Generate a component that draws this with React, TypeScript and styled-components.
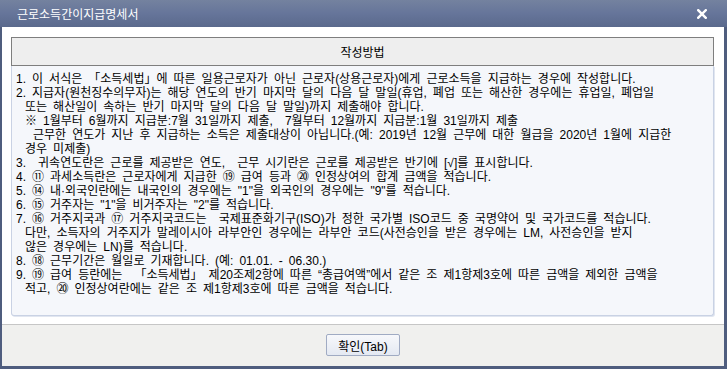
import React from 'react'
import styled, { createGlobalStyle } from 'styled-components'

const GlobalStyle = createGlobalStyle`
  html, body {
    margin: 0;
    padding: 0;
    background: #ffffff;
  }
  body {
    font-family: "Liberation Sans", "Noto Sans CJK KR", sans-serif;
    font-size: 12px;
    color: #000;
  }
`

const Window = styled.div`
  width: 727px;
  height: 369px;
  box-sizing: border-box;
  display: flex;
  flex-direction: column;
  background: #4f5d7e;
  padding: 0 3px 3px 2px;
`

const TitleBar = styled.div`
  height: 27px;
  flex: none;
  margin: 0 -3px 0 -2px;
  padding: 0 20px 0 17px;
  display: flex;
  align-items: center;
  justify-content: space-between;
  background: linear-gradient(#74829f, #66759a 50%, #5a698c);
  color: #ffffff;
  font-size: 12px;
`

const CloseIcon = styled.svg`
  width: 10px;
  height: 10px;
  margin-top: 1px;
`

const Body = styled.div`
  flex: none;
  background: #ffffff;
  padding: 10px 10px 8px 9px;
  border-bottom: 1px solid #c6c6c6;
`

const Header = styled.div`
  height: 27px;
  border: 1px solid #7e7e7e;
  background: #eeeeee;
  display: flex;
  align-items: center;
  justify-content: center;
  font-size: 12px;
`

const Panel = styled.div`
  height: 243px;
  border: 1px solid #c9d2e4;
  border-top: none;
  border-radius: 0 0 3px 3px;
  background: #f5f7fb;
  padding: 6px 4px 0 4px;
  box-shadow: 1px 1px 0 #e1e6f0;
`

const Line = styled.div<{ $indent: number }>`
  height: 14px;
  line-height: 14px;
  white-space: pre;
  padding-left: ${p => p.$indent}px;
  word-spacing: 2.7px;
`

const Footer = styled.div`
  flex: 1;
  background: #f0f0ee;
  display: flex;
  align-items: center;
  justify-content: center;
  padding-bottom: 1px;
`

const Button = styled.button`
  width: 74px;
  height: 22px;
  padding: 0;
  border: 1px solid #a0abc3;
  border-radius: 2px;
  background: linear-gradient(#f7f8fb, #e4e9f2);
  font-family: "Liberation Sans", "Noto Sans CJK KR", sans-serif;
  font-size: 12px;
  color: #000;
`

const lines: [number, string][] = [
  [0, '1. 이 서식은 「소득세법」에 따른 일용근로자가 아닌 근로자(상용근로자)에게 근로소득을 지급하는 경우에 작성합니다.'],
  [0, '2. 지급자(원천징수의무자)는 해당 연도의 반기 마지막 달의 다음 달 말일(휴업, 폐업 또는 해산한 경우에는 휴업일, 폐업일'],
  [9, '또는 해산일이 속하는 반기 마지막 달의 다음 달 말일)까지 제출해야 합니다.'],
  [9, '※ 1월부터 6월까지 지급분:7월 31일까지 제출,  7월부터 12월까지 지급분:1월 31일까지 제출'],
  [17, '근무한 연도가 지난 후 지급하는 소득은 제출대상이 아닙니다.(예: 2019년 12월 근무에 대한 월급을 2020년 1월에 지급한'],
  [9, '경우 미제출)'],
  [0, '3.  귀속연도란은 근로를 제공받은 연도,  근무 시기란은 근로를 제공받은 반기에 [√]를 표시합니다.'],
  [0, '4. ⑪ 과세소득란은 근로자에게 지급한 ⑲ 급여 등과 ⑳ 인정상여의 합계 금액을 적습니다.'],
  [0, '5. ⑭ 내·외국인란에는 내국인의 경우에는 "1"을 외국인의 경우에는 "9"를 적습니다.'],
  [0, '6. ⑮ 거주자는 "1"을 비거주자는 "2"를 적습니다.'],
  [0, '7. ⑯ 거주지국과 ⑰ 거주지국코드는  국제표준화기구(ISO)가 정한 국가별 ISO코드 중 국명약어 및 국가코드를 적습니다.'],
  [9, '다만, 소득자의 거주지가 말레이시아 라부안인 경우에는 라부안 코드(사전승인을 받은 경우에는 LM, 사전승인을 받지'],
  [9, '않은 경우에는 LN)를 적습니다.'],
  [0, '8. ⑱ 근무기간은 월일로 기재합니다. (예: 01.01. - 06.30.)'],
  [0, '9. ⑲ 급여 등란에는  「소득세법」 제20조제2항에 따른 “총급여액”에서 같은 조 제1항제3호에 따른 금액을 제외한 금액을'],
  [9, '적고, ⑳ 인정상여란에는 같은 조 제1항제3호에 따른 금액을 적습니다.'],
]

export default function App() {
  return (
    <>
      <GlobalStyle />
      <Window>
        <TitleBar>
          <span>근로소득간이지급명세서</span>
          <CloseIcon viewBox="0 0 10 10">
            <path d="M1.2 1.2 L8.8 8.8 M8.8 1.2 L1.2 8.8" stroke="#ffffff" strokeWidth="2.4" strokeLinecap="square" />
          </CloseIcon>
        </TitleBar>
        <Body>
          <Header>작성방법</Header>
          <Panel>
            {lines.map(([indent, text], i) => (
              <Line key={i} $indent={indent}>{text}</Line>
            ))}
          </Panel>
        </Body>
        <Footer>
          <Button>확인(Tab)</Button>
        </Footer>
      </Window>
    </>
  )
}
